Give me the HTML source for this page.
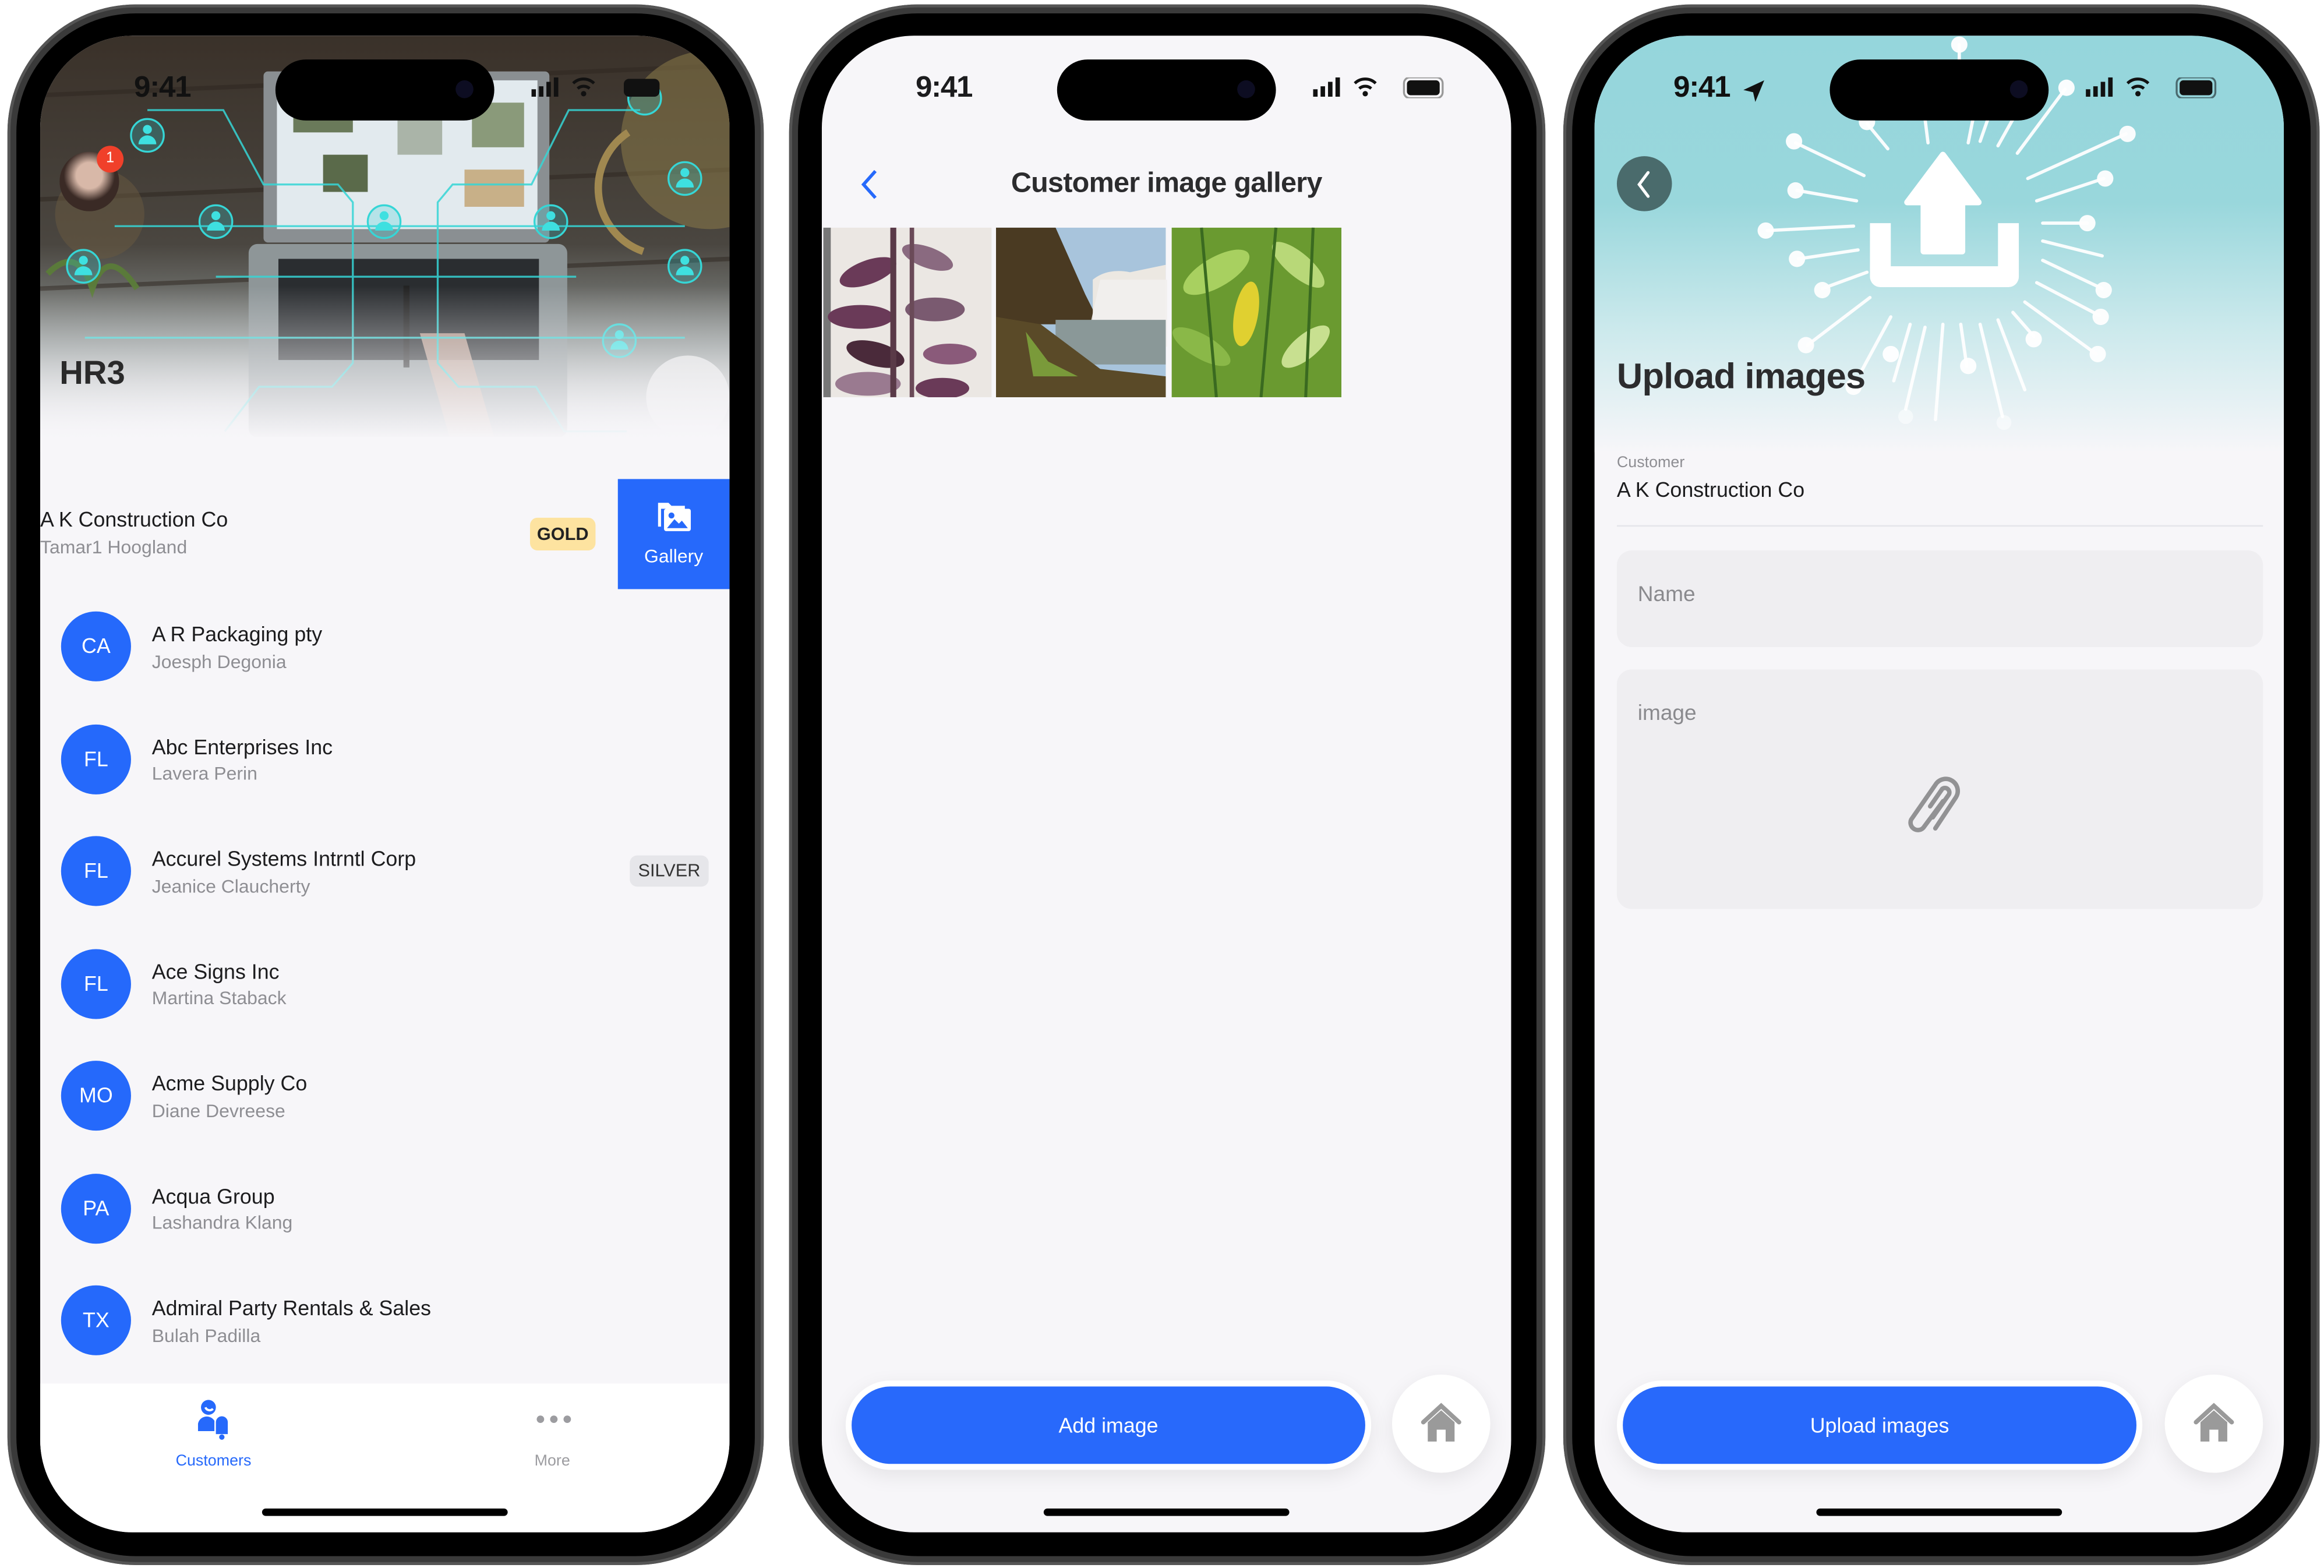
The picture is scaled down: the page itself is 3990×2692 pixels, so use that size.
<!DOCTYPE html>
<html><head><meta charset="utf-8">
<style>
*{margin:0;padding:0;box-sizing:border-box}
html,body{width:3990px;height:2692px;overflow:hidden;background:#fff}
#w{position:absolute;left:0;top:0;width:1561px;height:1054px;transform:scale(2.5561,2.5541);transform-origin:0 0;font-family:"Liberation Sans",sans-serif;color:#1c1c1e}
.ph{position:absolute;top:3px;width:508px;height:1049px;border-radius:86px;background:#3a3a3a;box-shadow:inset 0 0 0 2px #555}
.bz{position:absolute;left:6px;top:6px;right:6px;bottom:6px;border-radius:80px;background:#000}
.sc{position:absolute;top:24px;width:463px;height:1006px;border-radius:62px;overflow:hidden;background:#f7f6f9}
.island{position:absolute;left:158px;top:16px;width:147px;height:41px;border-radius:21px;background:#000}
.island:after{content:"";position:absolute;right:14px;top:14px;width:12px;height:12px;border-radius:50%;background:#0d0d22}
.abs{position:absolute}
.time{position:absolute;top:24px;font-size:20px;font-weight:600;letter-spacing:-0.5px}
.row .av{position:absolute;left:14px;width:47px;height:47px;border-radius:50%;background:#2569fb;color:#fff;font-size:14px;text-align:center;line-height:47px}
.nm{position:absolute;left:75px;font-size:14px;color:#1c1c1e;white-space:nowrap}
.sb{position:absolute;left:75px;font-size:12.5px;color:#8e8e93;white-space:nowrap}
.hi{position:absolute;bottom:11px;left:149px;width:165px;height:5px;border-radius:3px;background:#000}
.btn{position:absolute;top:904px;height:60px;border-radius:30px;background:#fff;box-shadow:0 4px 14px rgba(0,0,0,.08)}
.btn div{position:absolute;left:4px;top:4px;right:4px;bottom:4px;border-radius:26px;background:#2869fb;color:#fff;font-size:14px;text-align:center;line-height:52px}
.home{position:absolute;top:900px;width:66px;height:66px;border-radius:50%;background:#fff;box-shadow:0 4px 14px rgba(0,0,0,.08)}
</style></head><body><div id="w">

<!-- PHONE 1 -->
<div class="ph" style="left:5px"><div class="bz"></div></div>
<div class="sc" style="left:27px">
  <svg class="abs" style="left:0;top:0" width="463" height="280">
    <defs>
      <linearGradient id="g1" x1="0" y1="0" x2="0" y2="1">
        <stop offset="0" stop-color="#3a3129"/><stop offset=".5" stop-color="#4a4640"/><stop offset=".75" stop-color="#8e9594"/><stop offset="1" stop-color="#f7f6f9"/>
      </linearGradient>
      <linearGradient id="fade" x1="0" y1="0" x2="0" y2="1"><stop offset=".6" stop-color="#f7f6f9" stop-opacity="0"/><stop offset=".97" stop-color="#f7f6f9"/></linearGradient>
    </defs>
    <rect width="463" height="280" fill="url(#g1)"/>
    <path d="M0 40L463 20M0 110L463 90M0 170L463 150" stroke="#2e2620" stroke-width="3" opacity=".5"/>
    <rect x="150" y="24" width="192" height="115" fill="#8a8f92" rx="3"/>
    <rect x="159" y="30" width="175" height="100" fill="#e2eaee"/>
    <rect x="170" y="40" width="40" height="25" fill="#6a7a5a"/><rect x="240" y="50" width="30" height="30" fill="#aab4a8"/><rect x="290" y="45" width="35" height="30" fill="#8a9a7a"/><rect x="190" y="80" width="30" height="25" fill="#5a6a4a"/><rect x="285" y="90" width="40" height="25" fill="#c8b088"/>
    <rect x="140" y="140" width="214" height="130" fill="#8e9698" rx="6"/>
    <rect x="160" y="150" width="175" height="68" fill="#2a2d30"/>
    <path d="M255 200l20 70h30l-20-70z" fill="#c8a898" opacity=".8"/>
    <rect x="244" y="168" width="4" height="55" fill="#222"/>
    <circle cx="450" cy="70" r="60" fill="#8a7a48" opacity=".55"/>
    <path d="M395 65a45 45 0 0 0 10 80" stroke="#a08850" stroke-width="5" fill="none"/>
    <circle cx="40" cy="120" r="30" fill="#6a5a40" opacity=".5"/>
    <path d="M5 160q20-20 30 10q10-30 30 0" stroke="#5a7a3a" stroke-width="4" fill="none"/>
    <circle cx="435" cy="243" r="28" fill="#eaeaea" opacity=".8"/>
    <g stroke="#36d6d6" stroke-width="1.3" fill="none" opacity=".85">
      <path d="M72 50H123L150 100H200L210 112V220L196 236H147L124 266"/>
      <path d="M403 50H355L330 100H277L267 112V220L281 236H333L352 266H394"/>
      <path d="M50 128H433M30 203H433M118 162H360"/>
    </g>
    <g>
      <g fill="#2fd0d6" stroke="#36d6d6" stroke-width="1.3">
        <circle cx="72" cy="67" r="11" fill-opacity=".25"/><circle cx="433" cy="96" r="11" fill-opacity=".25"/>
        <circle cx="118" cy="125" r="11" fill-opacity=".25"/><circle cx="231" cy="125" r="11" fill-opacity=".25"/>
        <circle cx="343" cy="125" r="11" fill-opacity=".25"/><circle cx="29" cy="155" r="11" fill-opacity=".25"/>
        <circle cx="433" cy="155" r="11" fill-opacity=".25"/><circle cx="389" cy="205" r="11" fill-opacity=".25"/>
        <circle cx="406" cy="42" r="11" fill-opacity=".25"/>
      </g>
      <g fill="#3ee0e0">
        <circle cx="72" cy="63" r="3"/><path d="M66 73a6 6 0 0 1 12 0z"/>
        <circle cx="433" cy="92" r="3"/><path d="M427 102a6 6 0 0 1 12 0z"/>
        <circle cx="118" cy="121" r="3"/><path d="M112 131a6 6 0 0 1 12 0z"/>
        <circle cx="231" cy="121" r="3"/><path d="M225 131a6 6 0 0 1 12 0z"/>
        <circle cx="343" cy="121" r="3"/><path d="M337 131a6 6 0 0 1 12 0z"/>
        <circle cx="29" cy="151" r="3"/><path d="M23 161a6 6 0 0 1 12 0z"/>
        <circle cx="433" cy="151" r="3"/><path d="M427 161a6 6 0 0 1 12 0z"/>
        <circle cx="389" cy="201" r="3"/><path d="M383 211a6 6 0 0 1 12 0z"/>
      </g>
    </g>
    <rect width="463" height="280" fill="url(#fade)"/>
  </svg>
  <div class="time" style="left:63px;color:#111">9:41</div>
  <svg class="abs" style="left:330px;top:28px" width="100" height="14"><rect x="0" y="8" width="3" height="5" fill="#111"/><rect x="5" y="6" width="3" height="7" fill="#111"/><rect x="10" y="3" width="3" height="10" fill="#111"/><rect x="15" y="0" width="3" height="13" fill="#111"/><path d="M28 4a10 10 0 0 1 14 0M31 7.5a6 6 0 0 1 8 0" stroke="#111" stroke-width="2" fill="none"/><circle cx="35" cy="11" r="1.8" fill="#111"/><rect x="62" y="1" width="24" height="12" rx="3.5" fill="#111"/></svg>
  <div class="island"></div>
  <div class="abs" style="left:13px;top:78px;width:40px;height:40px;border-radius:50%;background:radial-gradient(circle at 50% 40%,#d8b8a8 0 28%,#3a2a25 55%)"></div>
  <div class="abs" style="left:38px;top:74px;width:18px;height:18px;border-radius:50%;background:#f0402a;color:#fff;font-size:10px;text-align:center;line-height:18px">1</div>
  <div class="abs" style="left:13px;top:214px;font-size:22px;font-weight:700;color:#2a2a2a">HR3</div>

  <div class="abs" style="left:0;top:298px;width:463px;height:74px">
    <div class="abs" style="left:0;top:19px;font-size:14px;white-space:nowrap">A K Construction Co</div>
    <div class="abs" style="left:0;top:39px;font-size:12.5px;color:#8e8e93;white-space:nowrap">Tamar1 Hoogland</div>
    <div class="abs" style="left:329px;top:26px;width:44px;height:22px;border-radius:5px;background:#fde3a0;font-size:12px;font-weight:700;text-align:center;line-height:22px;color:#222">GOLD</div>
    <div class="abs" style="left:388px;top:0;width:75px;height:74px;background:#2669fb;color:#fff;font-size:12.5px;text-align:center">
      <svg style="position:absolute;left:26px;top:14px" width="24" height="22" viewBox="0 0 24 22"><path d="M1 2h7l2 2h9v2H3v12H1z" fill="#fff"/><rect x="5" y="6" width="18" height="15" rx="1.5" fill="#fff"/><circle cx="10" cy="10.5" r="2" fill="#2669fb"/><path d="M7 19l5-6 3 3 2-2 4 5z" fill="#2669fb"/></svg>
      <div style="position:absolute;left:0;right:0;top:45px">Gallery</div>
    </div>
  </div>

  <div class="row">
    <div class="av" style="top:387px">CA</div><div class="nm" style="top:394px">A R Packaging pty</div><div class="sb" style="top:414px">Joesph Degonia</div>
    <div class="av" style="top:463px">FL</div><div class="nm" style="top:470px">Abc Enterprises Inc</div><div class="sb" style="top:489px">Lavera Perin</div>
    <div class="av" style="top:538px">FL</div><div class="nm" style="top:545px">Accurel Systems Intrntl Corp</div><div class="sb" style="top:565px">Jeanice Claucherty</div>
    <div class="abs" style="left:396px;top:551px;width:53px;height:21px;border-radius:5px;background:#e6e6ea;font-size:12px;text-align:center;line-height:21px;color:#333">SILVER</div>
    <div class="av" style="top:614px">FL</div><div class="nm" style="top:621px">Ace Signs Inc</div><div class="sb" style="top:640px">Martina Staback</div>
    <div class="av" style="top:689px">MO</div><div class="nm" style="top:696px">Acme Supply Co</div><div class="sb" style="top:716px">Diane Devreese</div>
    <div class="av" style="top:765px">PA</div><div class="nm" style="top:772px">Acqua Group</div><div class="sb" style="top:791px">Lashandra Klang</div>
    <div class="av" style="top:840px">TX</div><div class="nm" style="top:847px">Admiral Party Rentals &amp; Sales</div><div class="sb" style="top:867px">Bulah Padilla</div>
  </div>

  <div class="abs" style="left:0;top:906px;width:463px;height:100px;background:#fff"></div>
  <svg class="abs" style="left:104px;top:916px" width="30" height="30" viewBox="0 0 30 30"><circle cx="9" cy="6" r="5" fill="#2669fb"/><path d="M7 6a3 3 0 0 0 5 1" stroke="#fff" stroke-width="1.5" fill="none"/><path d="M2 22v-5a6 6 0 0 1 11 -2v7z" fill="#2669fb"/><path d="M14 24v-8a4 4 0 0 1 8 0v8z" fill="#2669fb"/><circle cx="18" cy="26" r="1.8" fill="#2669fb"/></svg>
  <div class="abs" style="left:91px;top:952px;font-size:10.5px;color:#2669fb">Customers</div>
  <svg class="abs" style="left:333px;top:926px" width="26" height="8"><circle cx="3" cy="4" r="2.5" fill="#9c9ca0"/><circle cx="12" cy="4" r="2.5" fill="#9c9ca0"/><circle cx="21" cy="4" r="2.5" fill="#9c9ca0"/></svg>
  <div class="abs" style="left:332px;top:952px;font-size:10.5px;color:#9c9ca0">More</div>
  <div class="hi"></div>
</div>

<!-- PHONE 2 -->
<div class="ph" style="left:530px"><div class="bz"></div></div>
<div class="sc" style="left:552px">
  <div class="time" style="left:63px">9:41</div>
  <svg class="abs" style="left:330px;top:28px" width="100" height="14"><rect x="0" y="8" width="3" height="5" fill="#111"/><rect x="5" y="6" width="3" height="7" fill="#111"/><rect x="10" y="3" width="3" height="10" fill="#111"/><rect x="15" y="0" width="3" height="13" fill="#111"/><path d="M28 4a10 10 0 0 1 14 0M31 7.5a6 6 0 0 1 8 0" stroke="#111" stroke-width="2" fill="none"/><circle cx="35" cy="11" r="1.8" fill="#111"/><rect x="61" y="0" width="26" height="14" rx="4" fill="none" stroke="#999" stroke-width="1.3"/><rect x="63" y="2" width="22" height="10" rx="2.5" fill="#111"/></svg>
  <div class="island"></div>
  <svg class="abs" style="left:25px;top:89px" width="14" height="22"><path d="M11 2L3 11l8 9" stroke="#2669fb" stroke-width="2.2" fill="none"/></svg>
  <div class="abs" style="left:0;width:463px;top:89px;text-align:center;font-size:19px;font-weight:700;color:#2c2c2e;letter-spacing:-0.3px">Customer image gallery</div>
  <svg class="abs" style="left:1px;top:129px" width="348" height="114">
    <rect x="0" y="0" width="113" height="114" fill="#ebe7e3"/>
    <rect x="0" y="0" width="5" height="114" fill="#777"/>
    <g fill="#6a3a58">
      <ellipse cx="30" cy="30" rx="20" ry="8" transform="rotate(-20 30 30)"/><ellipse cx="70" cy="20" rx="18" ry="7" transform="rotate(20 70 20)" fill="#8a6a80"/>
      <ellipse cx="25" cy="60" rx="22" ry="8"/><ellipse cx="75" cy="55" rx="20" ry="8" fill="#7a5a70"/>
      <ellipse cx="35" cy="85" rx="20" ry="8" transform="rotate(15 35 85)" fill="#4a2a3a"/><ellipse cx="85" cy="85" rx="18" ry="7" fill="#8a5a7a"/>
      <ellipse cx="30" cy="105" rx="22" ry="8" fill="#9a7a90"/><ellipse cx="80" cy="108" rx="18" ry="7"/>
      <rect x="45" y="0" width="4" height="114" fill="#5a3a48"/><rect x="58" y="0" width="3" height="114" fill="#6a4a58"/>
    </g>
    <g transform="translate(116 0)">
      <rect width="114" height="114" fill="#a8c4dc"/>
      <path d="M0 0h40l20 45l10 20H0z" fill="#4a3a22"/>
      <path d="M65 35q10-8 25-5l24-5v40H65z" fill="#ece8e2"/>
      <path d="M70 35h45v45H60z" fill="#f2f0ee" opacity=".9"/>
      <path d="M40 62h74v30H40z" fill="#8a9898"/>
      <path d="M0 60l30 5l40 30l44 5v14H0z" fill="#5a4a28"/>
      <path d="M20 70l15 20l20 10l-30 0z" fill="#7a9a3a"/>
    </g>
    <g transform="translate(234 0)">
      <rect width="114" height="114" fill="#6a9a30"/>
      <ellipse cx="30" cy="30" rx="25" ry="10" fill="#a8d060" transform="rotate(-30 30 30)"/>
      <ellipse cx="85" cy="25" rx="22" ry="8" fill="#b8d878" transform="rotate(40 85 25)"/>
      <ellipse cx="20" cy="80" rx="22" ry="8" fill="#8ab848" transform="rotate(30 20 80)"/>
      <ellipse cx="90" cy="80" rx="20" ry="8" fill="#c8e090" transform="rotate(-40 90 80)"/>
      <ellipse cx="50" cy="58" rx="8" ry="22" fill="#e0d030" transform="rotate(10 50 58)"/>
      <path d="M20 0l10 114M70 0l-10 114M95 0l-5 114" stroke="#3a6a20" stroke-width="2"/>
    </g>
  </svg>
  <div class="btn" style="left:16px;width:353px"><div>Add image</div></div>
  <div class="home" style="left:383px">
    <svg style="position:absolute;left:19px;top:19px" width="28" height="28" viewBox="0 0 28 28"><path d="M2 13L14 2l12 11" stroke="#9a9a9a" stroke-width="3" fill="none" stroke-linecap="round"/><path d="M5 13L14 5l9 8v13h-6v-8h-6v8H5z" fill="#9a9a9a"/></svg>
  </div>
  <div class="hi"></div>
</div>

<!-- PHONE 3 -->
<div class="ph" style="left:1050px"><div class="bz"></div></div>
<div class="sc" style="left:1071px">
  <svg class="abs" style="left:0;top:0" width="463" height="280" viewBox="1071 24 463 280">
    <defs><linearGradient id="g3" x1="0" y1="0" x2="0" y2="1"><stop offset="0" stop-color="#95d6dc"/><stop offset=".4" stop-color="#99d7dc"/><stop offset=".7" stop-color="#cbe9ec"/><stop offset="1" stop-color="#f7f6f9"/></linearGradient></defs>
    <rect x="1071" y="24" width="463" height="280" fill="url(#g3)"/>
    <g stroke="#fff" stroke-width="2.2" stroke-linecap="round" opacity=".95">
      <path d="M1252 118L1206 96M1247 135L1207 128M1245 152L1187 155M1248 168L1208 174M1254 183L1224 194M1256 200L1214 232M1270 213L1250 250M1283 218L1272 256M1293 220L1280 275M1305 218L1300 282M1317 218L1321 246M1330 218L1345 280M1342 215L1360 262M1352 210L1366 226M1360 203L1408 238M1368 190L1410 212M1372 175L1412 194M1372 162L1412 172M1372 150L1402 150M1368 135L1413 120M1362 120L1428 90M1355 103L1387 60M1342 98L1370 48M1330 95L1338 72M1322 96L1326 76M1295 96L1293 80M1268 100L1254 83M1316 30L1316 40"/>
    </g>
    <g fill="#fff" opacity=".95">
      <circle cx="1205" cy="95" r="5.5"/><circle cx="1206" cy="128" r="5.5"/><circle cx="1186" cy="155" r="5.5"/><circle cx="1207" cy="174" r="5.5"/><circle cx="1224" cy="195" r="5.5"/><circle cx="1213" cy="232" r="5.5"/><circle cx="1245" cy="260" r="5.5"/><circle cx="1270" cy="238" r="5.5"/><circle cx="1322" cy="246" r="5.5"/><circle cx="1366" cy="228" r="5.5"/><circle cx="1409" cy="238" r="5.5"/><circle cx="1411" cy="213" r="5.5"/><circle cx="1413" cy="195" r="5.5"/><circle cx="1402" cy="150" r="5.5"/><circle cx="1414" cy="120" r="5.5"/><circle cx="1429" cy="90" r="5.5"/><circle cx="1388" cy="59" r="5.5"/><circle cx="1254" cy="82" r="5.5"/><circle cx="1316" cy="30" r="5.5"/><circle cx="1346" cy="284" r="5" opacity=".5"/><circle cx="1280" cy="280" r="5" opacity=".5"/>
    </g>
    <path d="M1263 150v36h86v-36" stroke="#fff" stroke-width="14" fill="none" stroke-linejoin="round"/>
    <path d="M1305 104l-24 32h11v33h26v-33h11z" fill="#fff" stroke="#fff" stroke-width="4" stroke-linejoin="round"/>
  </svg>
  <div class="time" style="left:53px;color:#111">9:41</div>
  <svg class="abs" style="left:99px;top:29px" width="16" height="16"><path d="M15 1L1 7.5l6.5 1.5L9 15.5z" fill="#111"/></svg>
  <svg class="abs" style="left:330px;top:28px" width="100" height="14"><rect x="0" y="8" width="3" height="5" fill="#111"/><rect x="5" y="6" width="3" height="7" fill="#111"/><rect x="10" y="3" width="3" height="10" fill="#111"/><rect x="15" y="0" width="3" height="13" fill="#111"/><path d="M28 4a10 10 0 0 1 14 0M31 7.5a6 6 0 0 1 8 0" stroke="#111" stroke-width="2" fill="none"/><circle cx="35" cy="11" r="1.8" fill="#111"/><rect x="61" y="0" width="26" height="14" rx="4" fill="none" stroke="#4a6a6e" stroke-width="1.3"/><rect x="63" y="2" width="22" height="10" rx="2.5" fill="#111"/></svg>
  <div class="island"></div>
  <div class="abs" style="left:15px;top:81px;width:37px;height:37px;border-radius:50%;background:#4a6b6c">
    <svg style="position:absolute;left:11px;top:9px" width="14" height="20"><path d="M10 2L4 10l6 8" stroke="#fff" stroke-width="2" fill="none" stroke-linecap="round"/></svg>
  </div>
  <div class="abs" style="left:15px;top:216px;font-size:24px;font-weight:700;color:#2c2c2e;letter-spacing:-0.3px">Upload images</div>
  <div class="abs" style="left:15px;top:281px;font-size:10.5px;color:#8e8e93">Customer</div>
  <div class="abs" style="left:15px;top:297px;font-size:14px;color:#1c1c1e">A K Construction Co</div>
  <div class="abs" style="left:15px;top:329px;width:434px;height:1px;background:#e5e5ea"></div>
  <div class="abs" style="left:15px;top:346px;width:434px;height:65px;border-radius:10px;background:#efeef1"></div>
  <div class="abs" style="left:29px;top:368px;font-size:14.5px;color:#8a8a8e">Name</div>
  <div class="abs" style="left:15px;top:426px;width:434px;height:161px;border-radius:10px;background:#efeef1"></div>
  <div class="abs" style="left:29px;top:448px;font-size:14.5px;color:#8a8a8e">image</div>
  <svg class="abs" style="left:206px;top:496px" width="50" height="50" viewBox="0 0 50 50"><path d="M27 18L17 38a5 5 0 0 1 -9 -4L20 8a8 8 0 0 1 15 6L25 37" stroke="#929294" stroke-width="3" fill="none" stroke-linecap="round" transform="rotate(10 25 25)"/><path d="M22 30l8 -17a3 3 0 0 0 -5 -3l-6 13" stroke="#929294" stroke-width="3" fill="none" stroke-linecap="round" transform="rotate(10 25 25)"/></svg>
  <div class="btn" style="left:15px;width:353px"><div>Upload images</div></div>
  <div class="home" style="left:383px">
    <svg style="position:absolute;left:19px;top:19px" width="28" height="28" viewBox="0 0 28 28"><path d="M2 13L14 2l12 11" stroke="#9a9a9a" stroke-width="3" fill="none" stroke-linecap="round"/><path d="M5 13L14 5l9 8v13h-6v-8h-6v8H5z" fill="#9a9a9a"/></svg>
  </div>
  <div class="hi"></div>
</div>

</div></body></html>
